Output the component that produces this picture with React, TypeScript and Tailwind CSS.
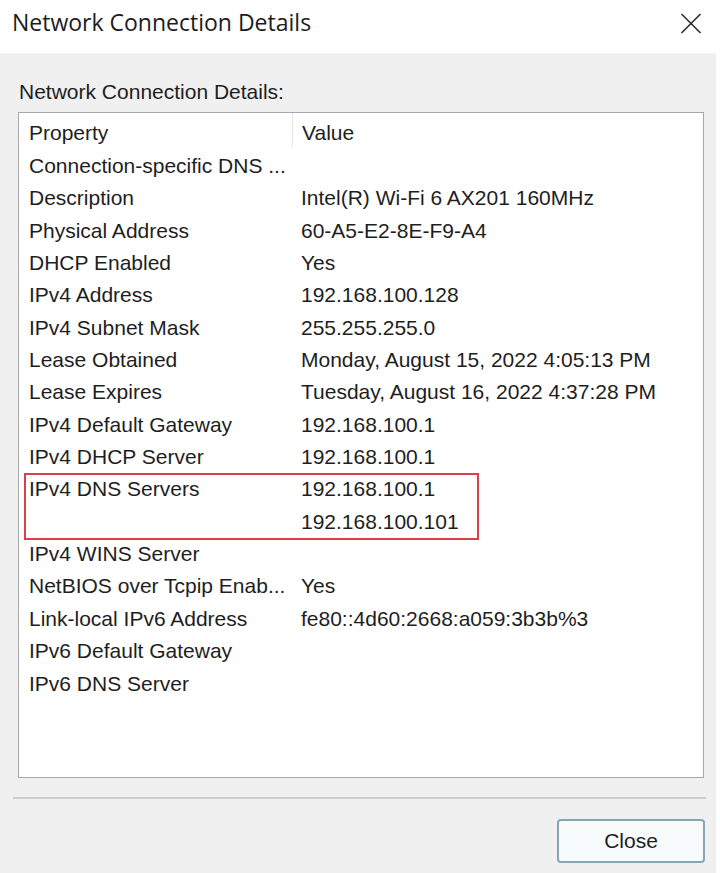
import React from "react";

const rowsBefore: [string, string][] = [
  ["Connection-specific DNS ...", ""],
  ["Description", "Intel(R) Wi-Fi 6 AX201 160MHz"],
  ["Physical Address", "60-A5-E2-8E-F9-A4"],
  ["DHCP Enabled", "Yes"],
  ["IPv4 Address", "192.168.100.128"],
  ["IPv4 Subnet Mask", "255.255.255.0"],
  ["Lease Obtained", "Monday, August 15, 2022 4:05:13 PM"],
  ["Lease Expires", "Tuesday, August 16, 2022 4:37:28 PM"],
  ["IPv4 Default Gateway", "192.168.100.1"],
  ["IPv4 DHCP Server", "192.168.100.1"],
];

const dnsRows: [string, string][] = [
  ["IPv4 DNS Servers", "192.168.100.1"],
  ["", "192.168.100.101"],
];

const rowsAfter: [string, string][] = [
  ["IPv4 WINS Server", ""],
  ["NetBIOS over Tcpip Enab...", "Yes"],
  ["Link-local IPv6 Address", "fe80::4d60:2668:a059:3b3b%3"],
  ["IPv6 Default Gateway", ""],
  ["IPv6 DNS Server", ""],
];

function Row({ p, v }: { p: string; v: string }) {
  return (
    <div className="flex h-[32.35px] leading-[32.35px] whitespace-nowrap">
      <div className="w-[273px] pl-[10px] shrink-0">{p}</div>
      <div className="pl-[9px]">{v}</div>
    </div>
  );
}

export default function App() {
  return (
    <div className="w-[720px] h-[873px] bg-white flex flex-col font-['Liberation_Sans',Arial,sans-serif] text-[#1e1e1e]">
      <div className="h-[53px] flex items-start justify-between shrink-0">
        <div className="pl-[12px] pt-[7px] font-['Open_Sans',sans-serif] text-[23px] leading-[30px] text-[#1c1c1c]">
          Network Connection Details
        </div>
        <svg
          className="mt-[13px] mr-[18px]"
          width="22"
          height="21"
          viewBox="0 0 22 21"
          fill="none"
          stroke="#2b2b2b"
          strokeWidth="1.6"
        >
          <line x1="1.5" y1="1" x2="20.5" y2="20" />
          <line x1="20.5" y1="1" x2="1.5" y2="20" />
        </svg>
      </div>
      <div className="flex-1 bg-[#f0f0f0] mr-[4px] pt-[27px] text-[21px]">
        <div className="pl-[19px] leading-[24px]">Network Connection Details:</div>
        <div className="mt-[8px] ml-[18px] w-[686px] h-[666px] border border-[#a8a8a8] bg-white overflow-hidden">
          <div className="flex h-[37px] whitespace-nowrap">
            <div className="w-[273px] pl-[10px] pt-[4px] leading-[32.35px] shrink-0">Property</div>
            <div className="border-l border-[#e6e6e6] h-[34px] pl-[9px] pt-[4px] leading-[32.35px]">Value</div>
          </div>
          {rowsBefore.map(([p, v], i) => (
            <Row key={i} p={p} v={v} />
          ))}
          <div className="relative">
            {dnsRows.map(([p, v], i) => (
              <Row key={i} p={p} v={v} />
            ))}
            <div className="absolute left-[5px] top-[0px] w-[455px] h-[67px] border-[2.5px] border-[#d8404a] pointer-events-none" />
          </div>
          {rowsAfter.map(([p, v], i) => (
            <Row key={i} p={p} v={v} />
          ))}
        </div>
        <div className="mt-[19px] ml-[13px] w-[693px] h-[2px] bg-[#cdcdcd]" />
        <div className="mt-[20px] ml-[557px] w-[148px] h-[44px] rounded-[4px] border-2 border-[#86a6b2] bg-[#f8fbfc] flex items-center justify-center leading-[24px]">
          Close
        </div>
      </div>
    </div>
  );
}
